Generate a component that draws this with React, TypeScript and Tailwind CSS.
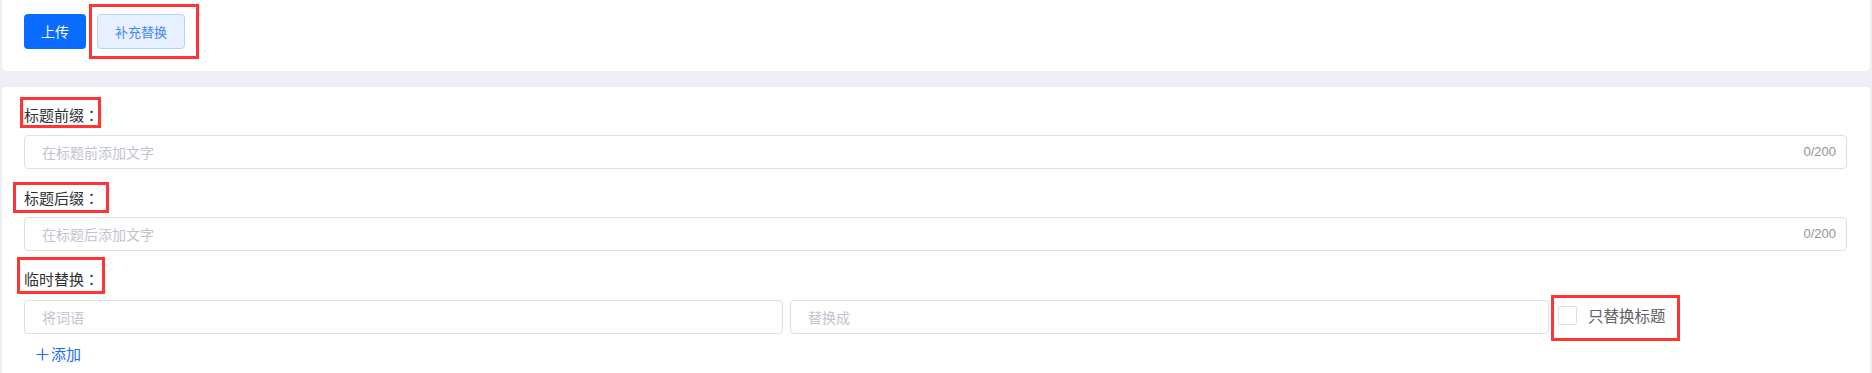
import { FC, ReactNode, useState } from "react";

const font = "font-['Noto_Sans_CJK_SC','Liberation_Sans',sans-serif]";

interface MarkProps {
  children: ReactNode;
  frame: string;
  className?: string;
}

// red annotation frame laid over the element it marks
const Marked: FC<MarkProps> = ({ children, frame, className = "" }) => (
  <div className={`relative ${className}`}>
    {children}
    <span
      className={`pointer-events-none absolute border-[3px] border-[#ff3434] ${frame}`}
    />
  </div>
);

const Label: FC<{ text: string }> = ({ text }) => (
  <span className="block h-[22px] text-[15px] leading-[22px] text-[#303133]">
    {text}
    <span className="font-['Noto_Sans_CJK_TC',sans-serif]">：</span>
  </span>
);

const CountInput: FC<{ placeholder: string }> = ({ placeholder }) => {
  const [value, setValue] = useState("");
  return (
    <div className="flex h-[34px] items-center rounded-[4px] border border-[#dcdfe6] bg-white pl-[17px] pr-[10px]">
      <input
        value={value}
        onChange={(e) => setValue(e.target.value.slice(0, 200))}
        placeholder={placeholder}
        className="h-full flex-1 bg-transparent text-[14px] text-[#606266] outline-none placeholder:text-[#c0c4cc]"
      />
      <span className="font-['Liberation_Sans',sans-serif] text-[13px] text-[#909399]">
        {value.length}/200
      </span>
    </div>
  );
};

const PlainInput: FC<{ placeholder: string }> = ({ placeholder }) => (
  <input
    placeholder={placeholder}
    className="h-[34px] w-[759px] rounded-[4px] border border-[#dcdfe6] bg-white pl-[17px] text-[14px] text-[#606266] outline-none placeholder:text-[#c0c4cc]"
  />
);

const App: FC = () => {
  const [onlyTitle, setOnlyTitle] = useState(false);

  return (
    <div className={`h-[373px] w-full overflow-hidden bg-[#eeeff5] px-[2px] ${font}`}>
      <div className="flex h-[71px] items-start gap-[11px] rounded-b-[4px] bg-white px-[22px] pt-[14px]">
        <button className="h-[35px] w-[62px] rounded-[4px] bg-[#0a6cff] text-[14px] text-white">
          上传
        </button>
        <Marked frame="-left-[8px] -right-[14px] -top-[10px] -bottom-[10px]">
          <button className="h-[35px] w-[88px] rounded-[4px] border border-[#b3d1ff] bg-[#e6f0ff] text-[13px] text-[#4a86f7]">
            补充替换
          </button>
        </Marked>
      </div>

      <div className="mt-[16px] h-[300px] rounded-t-[4px] bg-white pl-[22px] pr-[23px] pt-[17px]">
        <Marked
          className="w-fit"
          frame="-left-[4px] -right-[2px] -top-[7px] -bottom-[2px]"
        >
          <Label text="标题前缀" />
        </Marked>
        <div className="mt-[9px]">
          <CountInput placeholder="在标题前添加文字" />
        </div>

        <Marked
          className="mt-[18px] w-fit"
          frame="-left-[11px] -right-[10px] -top-[5px] -bottom-[4px]"
        >
          <Label text="标题后缀" />
        </Marked>
        <div className="mt-[8px]">
          <CountInput placeholder="在标题后添加文字" />
        </div>

        <Marked
          className="mt-[17px] w-fit"
          frame="-left-[7px] -right-[6px] -top-[11px] -bottom-[4px]"
        >
          <Label text="临时替换" />
        </Marked>
        <div className="mt-[10px] flex items-center">
          <PlainInput placeholder="将词语" />
          <div className="ml-[7px]">
            <PlainInput placeholder="替换成" />
          </div>
          <Marked
            className="ml-[9px] -mt-[4px]"
            frame="-left-[7px] -right-[14px] -top-[9px] -bottom-[15px]"
          >
            <label className="flex h-[22px] cursor-pointer items-center">
              <input
                type="checkbox"
                checked={onlyTitle}
                onChange={() => setOnlyTitle(!onlyTitle)}
                className="sr-only"
              />
              <span
                className={`h-[19px] w-[19px] rounded-[2px] border ${
                  onlyTitle ? "border-[#0a6cff] bg-[#0a6cff]" : "border-[#dcdfe6] bg-white"
                }`}
              />
              <span className="ml-[11px] text-[15.5px] leading-[22px] text-[#606266]">
                只替换标题
              </span>
            </label>
          </Marked>
        </div>

        <button className="ml-[12px] mt-[9px] flex h-[22px] items-center text-[15px] leading-[22px] text-[#1a6dff]">
          <svg width="13" height="13" viewBox="0 0 13 13" className="mr-[2px]">
            <path d="M6.5 0.5v12M0.5 6.5h12" stroke="currentColor" strokeWidth="1.2" />
          </svg>
          添加
        </button>
      </div>
    </div>
  );
};

export default App;
